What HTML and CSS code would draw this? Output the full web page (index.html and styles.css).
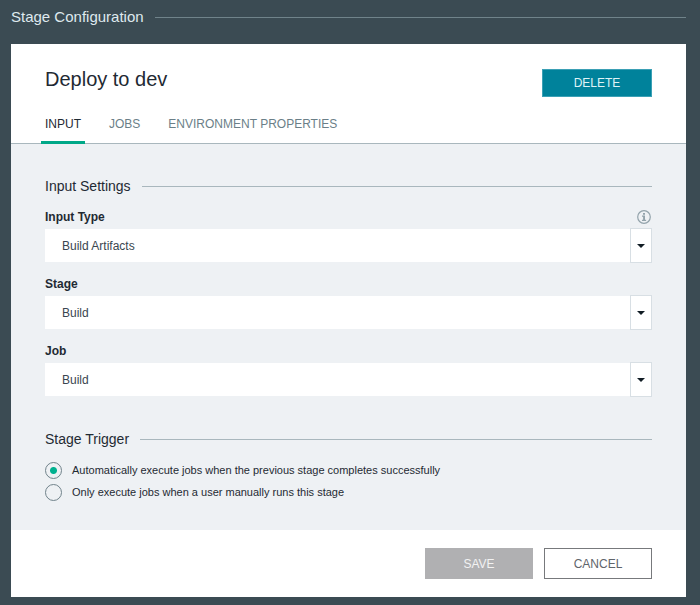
FILE: index.html
```html
<!DOCTYPE html>
<html lang="en">
<head>
<meta charset="utf-8">
<title>Stage Configuration</title>
<link rel="stylesheet" href="styles.css">
</head>
<body>
<main class="page">
  <h1 class="page-title ruled">Stage Configuration</h1>
  <form class="card">
    <header class="card-header">
      <div class="title-row">
        <h2 class="stage-name">Deploy to dev</h2>
        <button class="button button-delete" type="button">DELETE</button>
      </div>
      <nav class="tabs">
        <a class="tab tab-active" href="#input">INPUT</a>
        <a class="tab" href="#jobs">JOBS</a>
        <a class="tab" href="#environment">ENVIRONMENT PROPERTIES</a>
      </nav>
    </header>
    <div class="card-body">
      <section>
        <h3 class="section-title ruled">Input Settings</h3>
        <div class="field">
          <div class="field-head">
            <label for="input-type">Input Type</label>
            <svg class="info" viewBox="0 0 14 14" aria-hidden="true">
              <circle cx="7" cy="7" r="6.3" fill="none" stroke="currentColor" stroke-width="1.2"/>
              <path d="M6 2.9h2v1.8H6zM5 5.6h3v4.1h1.1v1.2H5V9.7h1.1V6.8H5z" fill="currentColor"/>
            </svg>
          </div>
          <div class="dropdown"><select id="input-type"><option>Build Artifacts</option></select></div>
        </div>
        <div class="field">
          <div class="field-head"><label for="stage">Stage</label></div>
          <div class="dropdown"><select id="stage"><option>Build</option></select></div>
        </div>
        <div class="field">
          <div class="field-head"><label for="job">Job</label></div>
          <div class="dropdown"><select id="job"><option>Build</option></select></div>
        </div>
      </section>
      <section class="trigger">
        <h3 class="section-title ruled">Stage Trigger</h3>
        <div class="choices">
          <label class="choice"><input type="radio" name="trigger" checked>Automatically execute jobs when the previous stage completes successfully</label>
          <label class="choice"><input type="radio" name="trigger">Only execute jobs when a user manually runs this stage</label>
        </div>
      </section>
    </div>
    <footer class="card-footer">
      <button class="button button-save" type="button">SAVE</button>
      <button class="button button-cancel" type="button">CANCEL</button>
    </footer>
  </form>
</main>
</body>
</html>
```
FILE: styles.css
```css
* {
  box-sizing: border-box;
}

body {
  margin: 0;
  background: #3b4b53;
  color: #1f2a33;
  font: 12px/16px "Liberation Sans", Arial, sans-serif;
}

h1, h2, h3 {
  margin: 0;
  font-weight: normal;
}

.page {
  padding: 8px 14px 8px 11px;
}

.ruled {
  display: flex;
  align-items: center;
  gap: 11px;
}

.ruled::after {
  content: "";
  flex: 1;
  height: 1px;
  background: #a9b7bd;
}

.page-title {
  margin-bottom: 18px;
  color: #dfe9ee;
  font-size: 15px;
  line-height: 18px;
}

.page-title::after {
  background: #70838a;
}

.card {
  background: #fff;
}

.card-header {
  padding: 25px 34px 0;
  border-bottom: 1px solid #a9b7bd;
}

.title-row {
  display: flex;
  justify-content: space-between;
  align-items: flex-start;
}

.stage-name {
  font-size: 20px;
  line-height: 20px;
}

.button {
  width: 108px;
  height: 31px;
  padding: 0;
  border: 1px solid;
  font: 12px/16px "Liberation Sans", Arial, sans-serif;
}

.button-delete {
  width: 110px;
  height: 28px;
  border-color: #3ba0b5;
  background: #00829b;
  color: #dff3f6;
}

.tabs {
  display: flex;
  gap: 20px;
  margin: 19px -4px -1px;
}

.tab {
  padding: 0 4px 9px;
  border-bottom: 3px solid transparent;
  color: #6b7f88;
  text-decoration: none;
}

.tab-active {
  border-color: #00a888;
  color: #1f2a33;
}

.card-body {
  padding: 33px 34px 29px;
  background: #eef1f4;
}

.section-title {
  margin-bottom: 13px;
  font-size: 14px;
  line-height: 18px;
}

.field {
  margin-bottom: 12px;
}

.field-head {
  display: flex;
  justify-content: space-between;
  align-items: center;
  height: 18px;
  margin-bottom: 2px;
  font-weight: bold;
}

.info {
  width: 14px;
  height: 14px;
  margin-right: 1px;
  color: #93a3ab;
}

.dropdown {
  position: relative;
  height: 35px;
  padding: 1px 0;
}

.dropdown select {
  display: block;
  width: 100%;
  height: 33px;
  padding: 0 34px 0 17px;
  border: 0;
  border-radius: 0;
  appearance: none;
  background: #fff;
  color: #3a4650;
  font: inherit;
}

.dropdown::before {
  content: "";
  position: absolute;
  inset: 0 0 0 auto;
  box-sizing: border-box;
  width: 22px;
  border: 1px solid #d8dfe4;
  background: #fff;
  pointer-events: none;
}

.dropdown::after {
  content: "";
  position: absolute;
  top: 16px;
  right: 7px;
  border: 4px solid transparent;
  border-top-color: #111c24;
  border-bottom: 0;
  pointer-events: none;
}

.trigger {
  margin-top: 33px;
}

.choices {
  display: grid;
  gap: 4px;
}

.choice {
  display: flex;
  align-items: center;
  gap: 10px;
  height: 18px;
  font-size: 11px;
}

.choice input {
  width: 17px;
  height: 17px;
  margin: 0;
  border: 1px solid #71838b;
  border-radius: 50%;
  appearance: none;
}

.choice input:checked {
  background: radial-gradient(circle, #00b08f 3px, transparent 4px);
}

.card-footer {
  display: flex;
  justify-content: flex-end;
  gap: 11px;
  padding: 18px 34px;
}

.button-save {
  border-color: #b0b0b2;
  background: #b0b0b2;
  color: #f2f2f2;
}

.button-cancel {
  border-color: #77797c;
  background: #fff;
  color: #5f656b;
}
```
